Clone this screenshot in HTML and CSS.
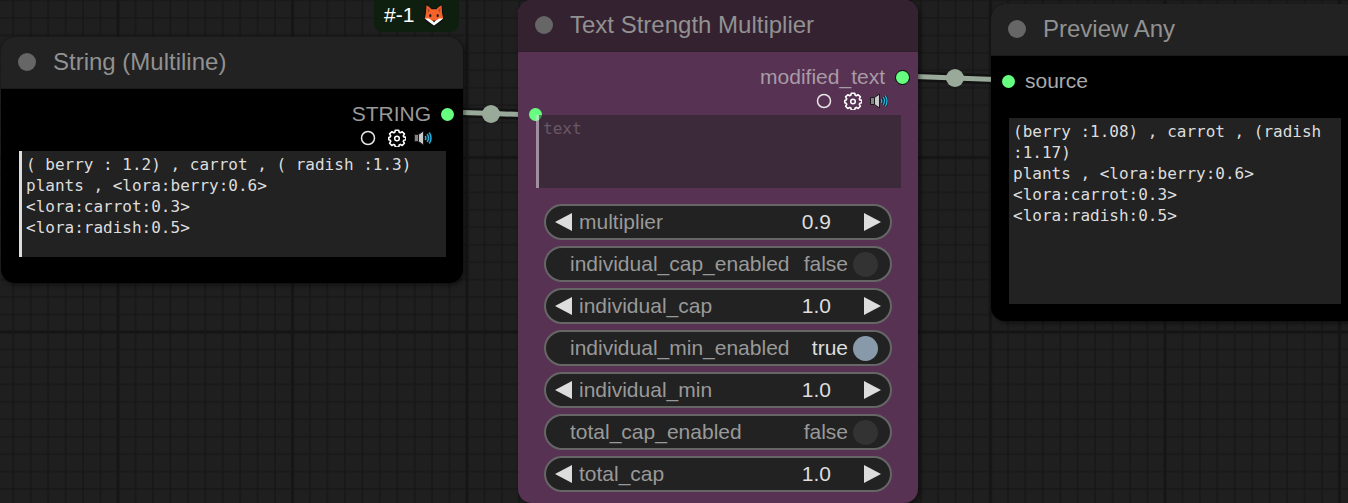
FILE: index.html
```html
<!DOCTYPE html>
<html lang="en">
<head>
<meta charset="utf-8">
<title>Node graph</title>
<link rel="stylesheet" href="styles.css">
</head>
<body>
<main class="canvas">
  <svg class="layer" aria-hidden="true">
    <defs>
      <pattern id="minor" width="1745" height="1745" patternUnits="userSpaceOnUse" patternTransform="translate(118 332) scale(0.01)">
        <path d="M0 0H1745M0 0V1745M1745 0V1745M0 1745H1745" stroke="#171717" stroke-width="150" fill="none"/>
      </pattern>
      <pattern id="major" width="1745" height="1745" patternUnits="userSpaceOnUse" patternTransform="translate(118 332) scale(0.1)">
        <path d="M0 0H1745M0 0V1745M1745 0V1745M0 1745H1745" stroke="#151515" stroke-width="28" fill="none"/>
      </pattern>
    </defs>
    <rect width="100%" height="100%" fill="url(#minor)"/>
    <rect width="100%" height="100%" fill="url(#major)"/>
    <g fill="none">
      <path d="M447 112C470 113 510 114 535 115M902 76C930 77 980 79 1008 80" stroke="#121212" stroke-width="10"/>
      <path d="M447 112C470 113 510 114 535 115M902 76C930 77 980 79 1008 80" stroke="#9aaa9a" stroke-width="5"/>
    </g>
    <circle cx="491" cy="114" r="9" fill="#9aaa9a"/>
    <circle cx="955" cy="78" r="9" fill="#9aaa9a"/>
  </svg>

  <svg class="symbols" aria-hidden="true">
    <symbol id="gear" viewBox="0 0 18 18">
      <path d="M7.300 1.200h3.400l.5 2.100 1.100.5 1.900-1.100 2.200 2.200-1.100 1.900.5 1.100 2.100.5v2.400l-2.100.5-.5 1.100 1.100 1.900-2.200 2.200-1.900-1.100-1.100.5-.5 2.100H7.300l-.5-2.100-1.100-.5-1.900 1.100-2.200-2.200 1.100-1.900-.5-1.100-1.400-.5V8.400l1.400-.5.5-1.100-1.100-1.900 2.200-2.200 1.900 1.100 1.100-.5z" fill="none" stroke="#fff" stroke-width="1.600" stroke-linejoin="round"/>
      <circle cx="9" cy="9.500" r="2.300" fill="none" stroke="#fff" stroke-width="1.500"/>
    </symbol>
    <symbol id="speaker" viewBox="0 0 18 18">
      <path d="M.5 5.500h4v7h-4z" fill="#858585" stroke="#1b1b1b" stroke-width="1"/>
      <path d="M4.500 5.500L9.500 2v14L4.500 12.500z" fill="#c9c9c9" stroke="#1b1b1b" stroke-width="1"/>
      <path d="M11.200 7q1.200 2 0 4M13.200 5q2.600 4 0 8M15.200 3.500q3.600 5.500 0 11" fill="none" stroke="#16262c" stroke-width="2.600"/>
      <path d="M11.200 7q1.200 2 0 4M13.200 5q2.600 4 0 8M15.200 3.500q3.600 5.500 0 11" fill="none" stroke="#24b4df" stroke-width="1.300"/>
    </symbol>
    <symbol id="ring" viewBox="0 0 18 18">
      <circle cx="9" cy="9" r="6.500" fill="none" stroke="#e6e6e6" stroke-width="1.500"/>
    </symbol>
  </svg>

  <div class="badge">
    <span>#-1</span>
    <svg class="fox" viewBox="0 0 22 24" role="img" aria-label="fox">
      <path d="M3.500 2L8 6h6l4.500-4 .8 8.500L20.500 16l-4.500 3.500-5 3.200-5-3.200L1.500 16l1.200-5.500z" fill="#111" stroke="#111" stroke-width="2" stroke-linejoin="round"/>
      <path d="M3.500 2.200Q6.500 3.500 8.500 6.200h5Q15.500 3.500 18.500 2.200l.6 8.300 1.200 5L15.500 18h-9L1.700 15.500l1.200-5z" fill="#f4642a"/>
      <path d="M4.600 4.600l2.300 2.600-2 2.800zM17.400 4.600l-2.300 2.600 2 2.800z" fill="#b8462a"/>
      <path d="M1.800 15.600l4.200-.1L9.500 18h3l3.500-2.500 4.200.1-4.700 3.600L11 22.600l-4.500-3.400z" fill="#fff"/>
      <ellipse cx="7.300" cy="12.600" rx="1.100" ry="1.600" fill="#171717"/><ellipse cx="14.700" cy="12.600" rx="1.100" ry="1.600" fill="#171717"/>
      <path d="M9.300 17.600h3.400L11 19.600z" fill="#222"/>
    </svg>
  </div>

  <section class="node node-string">
    <header class="node-head"><i class="state"></i><h2>String (Multiline)</h2></header>
    <div class="slot slot-out"><span>STRING</span><i class="port"></i></div>
    <div class="tools">
      <button aria-label="Status"><svg><use href="#ring"/></svg></button>
      <button aria-label="Settings"><svg><use href="#gear"/></svg></button>
      <button aria-label="Sound"><svg><use href="#speaker"/></svg></button>
    </div>
    <textarea class="field marked" aria-label="String" spellcheck="false">( berry : 1.2) , carrot , ( radish :1.3)
plants , &lt;lora:berry:0.6&gt;
&lt;lora:carrot:0.3&gt;
&lt;lora:radish:0.5&gt;</textarea>
  </section>

  <section class="node node-multiplier">
    <header class="node-head"><i class="state"></i><h2>Text Strength Multiplier</h2></header>
    <div class="slot slot-out"><span>modified_text</span><i class="port ringed"></i></div>
    <div class="tools">
      <button aria-label="Status"><svg><use href="#ring"/></svg></button>
      <button aria-label="Settings"><svg><use href="#gear"/></svg></button>
      <button aria-label="Sound"><svg><use href="#speaker"/></svg></button>
    </div>
    <div class="linked">
      <i class="port port-in"></i>
      <textarea class="field marked muted" aria-label="text" placeholder="text"></textarea>
    </div>
    <div class="widgets">
      <div class="widget number"><button class="prev" aria-label="Decrease multiplier"></button><label for="w1">multiplier</label><input id="w1" value="0.9"><button class="next" aria-label="Increase multiplier"></button></div>
      <div class="widget toggle"><label for="w2">individual_cap_enabled</label><output for="w2">false</output><input id="w2" type="checkbox"></div>
      <div class="widget number"><button class="prev" aria-label="Decrease individual_cap"></button><label for="w3">individual_cap</label><input id="w3" value="1.0"><button class="next" aria-label="Increase individual_cap"></button></div>
      <div class="widget toggle on"><label for="w4">individual_min_enabled</label><output for="w4">true</output><input id="w4" type="checkbox" checked></div>
      <div class="widget number"><button class="prev" aria-label="Decrease individual_min"></button><label for="w5">individual_min</label><input id="w5" value="1.0"><button class="next" aria-label="Increase individual_min"></button></div>
      <div class="widget toggle"><label for="w6">total_cap_enabled</label><output for="w6">false</output><input id="w6" type="checkbox"></div>
      <div class="widget number"><button class="prev" aria-label="Decrease total_cap"></button><label for="w7">total_cap</label><input id="w7" value="1.0"><button class="next" aria-label="Increase total_cap"></button></div>
    </div>
  </section>

  <section class="node node-preview">
    <header class="node-head"><i class="state"></i><h2>Preview Any</h2></header>
    <div class="slot slot-in"><i class="port"></i><span>source</span></div>
    <textarea class="field" aria-label="Preview" readonly>(berry :1.08) , carrot , (radish :1.17)
plants , &lt;lora:berry:0.6&gt;
&lt;lora:carrot:0.3&gt;
&lt;lora:radish:0.5&gt;</textarea>
  </section>
</main>
</body>
</html>
```
FILE: styles.css
```css
* { box-sizing: border-box; }
body {
  margin: 0;
  background: #1f1f1f;
  font-family: "Liberation Sans", Arial, sans-serif;
  font-size: 21px;
  color: #999;
}
button { padding: 0; border: 0; background: none; flex: none; }
input { font: inherit; margin: 0; }

.canvas { position: relative; height: 100vh; overflow: hidden; }
.layer { position: absolute; inset: 0; width: 100%; height: 100%; }
.symbols { display: none; }

.badge {
  position: absolute;
  left: 374px;
  top: 0;
  display: flex;
  align-items: center;
  gap: 9px;
  height: 32px;
  padding: 0 14px 2px 10px;
  border-radius: 0 0 8px 8px;
  background: #0f1f0f;
  color: #fff;
}
.fox { width: 22px; height: 24px; }

.node {
  position: absolute;
  display: flex;
  flex-direction: column;
  border-radius: 14px;
  background: #000;
  box-shadow: 2px 2px 5px rgba(0, 0, 0, .5);
}
.node-string { left: 1px; top: 37px; width: 462px; padding-bottom: 26px; }
.node-multiplier { left: 518px; top: 0; width: 400px; padding-bottom: 11px; background: #573253; }
.node-preview { left: 991px; top: 4px; width: 368px; padding-bottom: 17px; }

.node-head {
  display: flex;
  align-items: center;
  gap: 17px;
  height: 52px;
  padding: 0 0 1px 17px;
  margin-bottom: 11px;
  border-bottom: 1px solid #1a1a1a;
  border-radius: 14px 14px 0 0;
  background: #222;
}
.node-multiplier .node-head { background: #352230; border-color: #30202c; }
.node-head h2 { margin: 0; font-size: 24px; line-height: 28px; font-weight: 400; color: #919191; }
.state { width: 18px; height: 18px; border-radius: 50%; background: #666; }

.slot { display: flex; align-items: center; gap: 10px; height: 28px; line-height: 28px; }
.slot-out { justify-content: flex-end; padding-right: 9px; }
.slot-in { padding-left: 11px; margin-bottom: 23px; color: #aaa; }
.node-multiplier .slot { color: #a89ba6; padding-right: 8px; }
.port { flex: none; width: 13px; height: 13px; border-radius: 50%; background: #66ff7f; }
.ringed { width: 15px; height: 15px; border: 1px solid #000; }

.tools { display: flex; justify-content: flex-end; gap: 8px; height: 20px; padding-right: 31px; margin-bottom: 3px; align-items: center; }
.tools button, .tools svg { display: block; width: 18px; height: 18px; }
.tools button:first-child { margin-right: 3px; }
.node-multiplier .tools { padding-right: 30px; margin-bottom: 4px; }

.field {
  display: block;
  margin: 0 18px;
  padding: 3px 4px;
  border: 0;
  border-radius: 0;
  outline: 0;
  resize: none;
  overflow: hidden;
  background: #222;
  color: #ddd;
  font: 16px/21px "DejaVu Sans Mono", monospace;
}
.marked { border-left: 3px solid #ddd; }
.node-string .field { height: 106px; margin-right: 17px; }
.node-preview .field { height: 186px; }
.linked { position: relative; }
.port-in { position: absolute; left: 11px; top: -7px; }
.muted { position: relative; width: 365px; height: 73px; background: rgba(34, 34, 34, .5); border-color: rgba(221, 221, 221, .55); background-clip: padding-box; }
.muted::placeholder { color: #6a5767; opacity: 1; }

.widgets { display: flex; flex-direction: column; gap: 6px; margin: 16px 26px 0; }
.widget {
  display: flex;
  align-items: center;
  height: 36px;
  border: 2px solid #666;
  border-radius: 18px;
  background: #222;
}
.number { padding: 0 9px; }
.number label { margin-left: 7px; }
.number input { flex: 1; min-width: 0; margin-right: 33px; padding: 0; border: 0; background: none; color: #ddd; text-align: right; }
.prev, .next { width: 17px; height: 18px; background: #ddd; }
.prev { clip-path: polygon(100% 0, 100% 100%, 0 50%); }
.next { clip-path: polygon(0 0, 100% 50%, 0 100%); }
.toggle { padding: 0 12px 0 24px; }
.toggle output { margin-left: auto; margin-right: 5px; }
.toggle input { appearance: none; flex: none; width: 25px; height: 25px; border-radius: 50%; background: #333; }
.on output { color: #ddd; }
.on input { background: #8899aa; }
```
